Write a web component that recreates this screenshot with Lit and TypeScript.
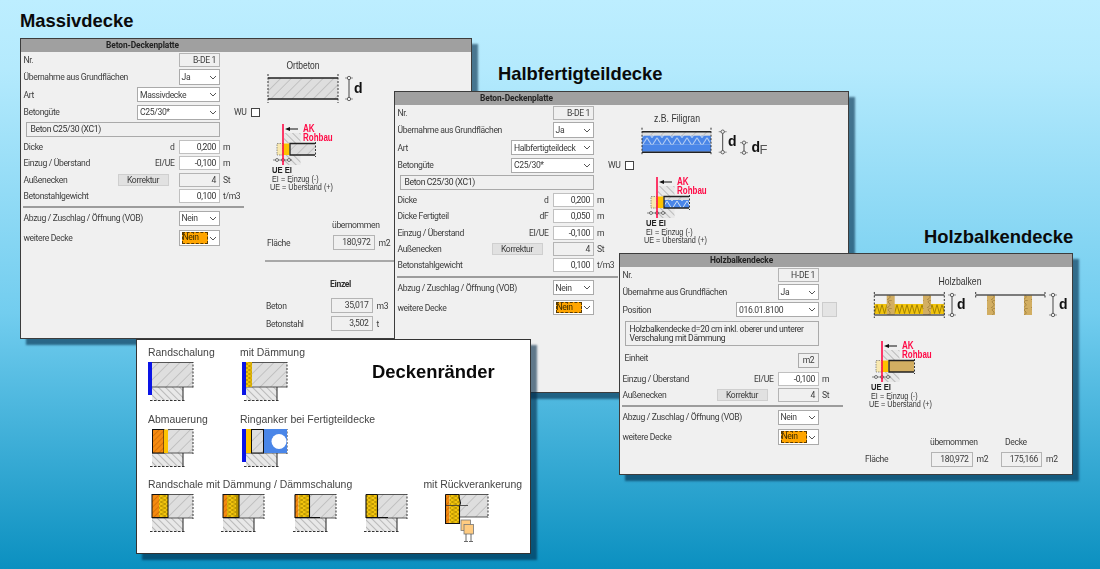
import { LitElement, html, svg, css, nothing } from 'lit';
import { customElement } from 'lit/decorators.js';
import { classMap } from 'lit/directives/class-map.js';

const chevron = html`<svg class="chev" width="8" height="5" viewBox="0 0 8 5"><path d="M1 1l3 3 3-3" fill="none" stroke="#555" stroke-width="1"/></svg>`;

const sel = (value: string, size = 'sm', orange = false) => html`
  <div class=${classMap({ sel: true, [size]: true })}>
    <span class=${orange ? 'focus' : ''}>${value}</span>${chevron}
  </div>`;

const box = (value: string, edit = false) =>
  html`<div class=${classMap({ box: true, edit })}>${value}</div>`;

const row = (label: string, ctl: unknown, sym = '', trail: unknown = '') => html`
  <div class="row">
    <span class="lab">${label}</span>
    ${sym ? html`<span class="sym">${sym}</span>` : nothing}
    ${ctl}
    <span class="trail">${trail}</span>
  </div>`;

// the captions in the drawings are squeezed sideways, so each gets its measured width
const label = (cls: string, x: number, y: number, width: number, text: string) =>
  svg`<text class=${cls} x=${x} y=${y} textLength=${width} lengthAdjust="spacingAndGlyphs">${text}</text>`;

const dim = (x: number, y1: number, y2: number) => svg`
  <line x1=${x} y1=${y1} x2=${x} y2=${y2} stroke="#444"/>
  <line x1=${x - 4} y1=${y1} x2=${x + 4} y2=${y1} stroke="#666" stroke-width=".7"/>
  <line x1=${x - 4} y1=${y2} x2=${x + 4} y2=${y2} stroke="#666" stroke-width=".7"/>
  <circle cx=${x} cy=${y1} r="1.7" fill="#f0f0f0" stroke="#444" stroke-width=".8"/>
  <circle cx=${x} cy=${y2} r="1.7" fill="#f0f0f0" stroke="#444" stroke-width=".8"/>`;

const edgeDash = (x: number, y1: number, y2: number) =>
  svg`<line x1=${x} y1=${y1} x2=${x} y2=${y2} stroke="#333" stroke-width="1" stroke-dasharray="2 1.5"/>`;

// eck detail with AK line, the slab part changes per window
const detail = (kind: string) => {
  const slab =
    kind === 'beton'
      ? svg`<rect x="27" y="19.5" width="25" height="11.5" fill="url(#hatch)"/>`
      : kind === 'fili'
        ? svg`<rect x="27" y="19.5" width="25" height="3.5" fill="url(#hatch)"/>
              <rect x="27" y="23" width="25" height="8" fill="url(#blue)"/>`
        : svg`<rect x="27" y="19.5" width="25" height="11.5" fill="#d2ae62"/>`;
  return html`<svg class="detail" width="130" height="70" viewBox="0 0 130 70">
    <rect x="21" y="9" width="16.5" height="10.5" fill="url(#wall)"/>
    <rect x="21" y="31" width="16.5" height="10" fill="url(#wall)"/>
    <rect x="14" y="19.5" width="6" height="11.5" fill="#f8e8b0" stroke="#555" stroke-width=".6" stroke-dasharray="1.5 1"/>
    <rect x="20" y="19.5" width="6.5" height="11.5" fill="#fcc200"/>
    ${slab}
    <path d="M52 19.5H27V31H52" fill="none" stroke="#222" stroke-width="1.3"/>
    ${edgeDash(52.5, 18, 33)}
    <line x1="10" y1="36" x2="29" y2="36" stroke="#555" stroke-width=".7"/>
    <circle cx="14" cy="36" r="1.5" fill="#f0f0f0" stroke="#444" stroke-width=".7"/>
    <circle cx="20" cy="36" r="1.5" fill="#f0f0f0" stroke="#444" stroke-width=".7"/>
    <circle cx="26" cy="36" r="1.5" fill="#f0f0f0" stroke="#444" stroke-width=".7"/>
    <line x1="20" y1="0" x2="20" y2="41" stroke="#ff0a46" stroke-width="1.6"/>
    <path d="M35 5H26" stroke="#111" fill="none"/><path d="M22 5l5-2v4z" fill="#111"/>
    ${label('ak', 40, 7.5, 11.7, 'AK')}
    ${label('ak', 40, 17, 29.7, 'Rohbau')}
    ${label('ue', 9, 48.5, 20, 'UE EI')}
    ${label('note', 9, 58, 46.7, 'EI = Einzug (-)')}
    ${label('note', 7, 66, 63, 'UE = Überstand (+)')}
  </svg>`;
};

const ortbeton = html`<svg class="fig" width="130" height="72" viewBox="0 -1 130 72">
  ${label('cap', 23.5, 15.5, 33, 'Ortbeton')}
  <rect x="5" y="25" width="70" height="21" fill="url(#hatch)"/>
  <path d="M5 25H75M5 46H75" stroke="#222" stroke-width="1.4"/>
  ${edgeDash(5, 21, 50)}${edgeDash(75, 21, 50)}
  ${dim(86, 25, 46)}
  <text class="d" x="91" y="40">d</text>
</svg>`;

const filigran = html`<svg class="fig" width="140" height="72" viewBox="0 -.7 140 72">
  ${label('cap', 17, 16, 46, 'z.B. Filigran')}
  <rect x="5" y="26" width="69" height="5" fill="url(#hatch)"/>
  <rect x="5" y="30" width="69" height="9" fill="url(#blue)"/>
  <rect x="5" y="39" width="69" height="7" fill="#4a86e8"/>
  <path d="M5 26H74M5 46.5H74" stroke="#222" stroke-width="1.4"/>
  ${edgeDash(5, 22, 50)}${edgeDash(74, 22, 50)}
  ${dim(85.7, 26, 46.5)}
  <text class="d" x="91" y="40">d</text>
  ${dim(107, 37, 47)}
  <text class="d" x="114.5" y="46">d</text>
  <text class="f" x="122.5" y="48">F</text>
</svg>`;

const beam = (x: number, h = 20) =>
  svg`<rect x=${x} y="27" width="8" height=${h} fill="url(#wood)"/>`;

const holz = html`<svg class="fig" width="210" height="73.7" viewBox="0 -1 210 73.7">
  ${label('cap', 76.5, 17.5, 43, 'Holzbalken')}
  <rect x="12.3" y="36" width="70" height="10" fill="url(#ins)"/>
  ${beam(24.7)}${beam(61)}
  <path d="M12.3 27H82.3M12.3 47H82.3" stroke="#555" stroke-width="1.6"/>
  ${edgeDash(12.3, 24, 50)}${edgeDash(82.3, 24, 50)}
  ${dim(90, 27, 47)}
  <text class="d" x="95" y="41">d</text>
  ${beam(125)}${beam(162)}
  <path d="M113.7 27H183" stroke="#555" stroke-width="1.6"/>
  ${edgeDash(113.7, 24, 30)}${edgeDash(183, 24, 30)}
  ${dim(191, 27, 47)}
  <text class="d" x="197" y="41">d</text>
</svg>`;

// one cut through a slab edge; front holds what sits before the slab
const edge = (slabX: number, front: unknown, h = 24, w = 45) => html`
  <svg class="edge" width="50" height=${h + 16} viewBox="0 0 50 ${h + 16}">
    <rect x=${slabX} y="0" width=${w - slabX} height=${h} fill="url(#hatch)"/>
    <rect x="4" y=${h} width="31" height="13.5" fill="url(#wall)"/>
    <path d="M${slabX} .5H${w}" stroke="#333" stroke-width=".8"/>
    <path d="M4 ${h}H${w}" stroke="#333" stroke-width=".8"/>
    <path d="M35 ${h}V${h + 13.5}" stroke="#222" stroke-width="1"/>
    ${edgeDash(w, -1, h + 1)}
    <line x1="2" y1=${h + 13.5} x2="38" y2=${h + 13.5} stroke="#333" stroke-dasharray="2.5 1.5"/>
    ${front}
  </svg>`;

const blueBar = svg`<rect x="0" y="0" width="4" height="33" fill="#0a14e6"/>`;

@customElement('app-root')
export class AppRoot extends LitElement {
  static styles = css`
    :host {
      display: block;
      position: relative;
      width: 1100px;
      height: 569px;
      overflow: hidden;
      font-family: 'Liberation Sans', Arial, sans-serif;
      background: linear-gradient(180deg, #bdeeff 0%, #b4eafd 12%, #72cdef 55%, #0b90c0 100%);
    }
    .defs { position: absolute; width: 0; height: 0; }
    h2 {
      position: absolute;
      margin: 0;
      font-size: 18.4px;
      line-height: 22px;
      font-weight: bold;
      color: #0a0a0a;
    }
    .h1 { left: 20px; top: 10px; }
    .h2 { left: 498px; top: 63px; }
    .h3 { left: 924px; top: 226px; }

    .win {
      position: absolute;
      box-sizing: border-box;
      background: #f0f0f0;
      border: 1px solid #3c3c3c;
      box-shadow: 6px 6px 2px rgba(0, 40, 70, 0.6);
      color: #3c3c3c;
      font-family: Roboto, 'Liberation Sans', sans-serif;
      font-size: 8.6px;
      letter-spacing: -0.35px;
      display: flex;
      flex-direction: column;
      filter: blur(0.25px);
    }
    .w1 { left: 20px; top: 38px; width: 452px; height: 301px; }
    .w2 { left: 394px; top: 91px; width: 455px; height: 302px; }
    .w3 { left: 619px; top: 253px; width: 454px; height: 222px; }
    .bar {
      height: 13px;
      line-height: 13px;
      background: #a0a0a0;
      flex: none;
    }
    .bar b {
      display: block;
      width: 243px;
      text-align: center;
      font-size: 8.4px;
      letter-spacing: -0.1px;
      color: #222;
    }
    .body { display: flex; flex: 1; }
    .form {
      width: 223px;
      flex: none;
      box-sizing: border-box;
      padding: 1px 0 0 2.5px;
      display: flex;
      flex-direction: column;
      gap: 2.4px;
    }
    .row { display: flex; align-items: center; min-height: 14px; white-space: nowrap; }
    .lab { flex: 1; }
    .sym { margin-right: 4px; }
    .trail { width: 24px; flex: none; padding-left: 3px; box-sizing: border-box; display: flex; align-items: center; gap: 4px; }
    .box {
      width: 41.5px;
      height: 14px;
      line-height: 13px;
      box-sizing: border-box;
      border: 1px solid #b4b4b4;
      text-align: right;
      padding-right: 3px;
      flex: none;
    }
    .box.edit { background: #fff; border-color: #c0c0c0; color: #333; }
    .sel {
      height: 15.3px;
      box-sizing: border-box;
      border: 1px solid #aaa;
      background: #fff;
      display: flex;
      align-items: center;
      justify-content: space-between;
      padding: 0 2.5px 0 2px;
      flex: none;
    }
    .sm { width: 41.5px; }
    .lg { width: 83px; }
    .focus {
      background: #ffa500;
      outline: 1px dashed #5a3a00;
      outline-offset: -1px;
      width: 26px;
      height: 11.5px;
      line-height: 11.5px;
      padding-left: 1px;
      box-sizing: border-box;
      color: #3a2a00;
    }
    .check { width: 9px; height: 9px; background: #fff; border: 1px solid #444; flex: none; box-sizing: border-box; }
    .wu { margin-left: 11px; }
    .btn {
      width: 51px;
      height: 12px;
      line-height: 11px;
      box-sizing: border-box;
      text-align: center;
      background: #e1e1e1;
      border: 1px solid #cfcfcf;
      margin-right: 10px;
      flex: none;
    }
    .txt {
      margin-left: 2px;
      width: 194px;
      box-sizing: border-box;
      border: 1px solid #aaa;
      padding: 0 4px;
      height: 15px;
      line-height: 13px;
      color: #333;
    }
    .txt.two { height: 25px; line-height: 9px; padding-top: 3px; margin-top: 1px; white-space: nowrap; }
    hr {
      margin: 1px 0 0 -0.5px;
      height: 2px;
      width: 221px;
      border: 0;
      background: #9c9c9c;
      flex: none;
    }
    .more { margin-top: 2px; }
    .unit-row { align-items: flex-start; height: 16px; margin-top: 5px; }
    .unit-row .lab { padding-left: 2px; }
    .unit-box { width: 21px; height: 15px; line-height: 13px; box-sizing: border-box; border: 1px solid #aaa; background: #f0f0f0; text-align: center; flex: none; }
    .gray-btn { width: 15px; height: 15px; background: #e4e4e4; border: 1px solid #ccc; box-sizing: border-box; }

    .side { flex: 1; display: flex; flex-direction: column; min-width: 0; padding-left: 19px; }
    svg { display: block; flex: none; }
    .cap { font-size: 10.5px; letter-spacing: 0; fill: #333; font-family: 'Liberation Sans', sans-serif; }
    .d { font-size: 14px; letter-spacing: 0; font-weight: bold; fill: #111; font-family: 'Liberation Sans', sans-serif; }
    .f { font-size: 13px; letter-spacing: 0; fill: #555; font-family: 'Liberation Sans', sans-serif; }
    .ak { font-size: 10px; letter-spacing: 0; font-weight: bold; fill: #ff0a46; font-family: 'Liberation Sans', sans-serif; }
    .ue { font-size: 9.5px; letter-spacing: 0; font-weight: bold; fill: #222; font-family: 'Liberation Sans', sans-serif; }
    .note { font-size: 8.4px; letter-spacing: 0; fill: #333; font-family: 'Liberation Sans', sans-serif; }
    .totals { display: flex; flex-direction: column; white-space: nowrap; }
    .t1 { margin-top: 25px; }
    .t3 { margin-top: 25px; }
    .t-head, .t-row { display: flex; align-items: center; }
    .t-head { height: 12px; padding-left: 69px; }
    .t3 .t-head { padding-left: 68px; margin-bottom: 4px; }
    .t3 .t-head span:first-child { width: 75px; }
    .t-row { height: 15px; margin-top: 4px; padding-left: 4px; }
    .t3 .t-row { padding-left: 3px; margin-top: 0; }
    .t-lab { width: 66px; flex: none; }
    .t-row .box { height: 15px; }
    .t-unit { margin-left: 4px; width: 24px; flex: none; }
    .t-div { height: 2px; width: 200px; margin: 10px 0 0 2px; background: #a8a8a8; }
    .t-sub { font-weight: bold; padding-left: 67px; margin-top: 16px; height: 12px; line-height: 12px; color: #333; }
    .t-row.tight { padding-left: 3px; margin-top: 3px; }
    .t-sub + .t-row.tight { margin-top: 8px; }
    .t-row.tight .t-lab { width: 65px; }

    .panel {
      position: absolute;
      left: 136px;
      top: 339px;
      width: 395px;
      height: 215px;
      box-sizing: border-box;
      background: #fff;
      border: 1px solid #333;
      box-shadow: 6px 6px 2px rgba(0, 40, 70, 0.6);
      padding: 6px 0 0 11px;
      color: #444;
      font-size: 10.45px;
      display: flex;
      flex-direction: column;
      filter: blur(0.25px);
    }
    .pr { display: flex; }
    .cell { display: flex; flex-direction: column; white-space: nowrap; line-height: 14px; }
    .cell svg { margin-top: 2px; }
    .c1 { width: 92px; }
    .c2 { width: 132px; }
    .c2 svg { margin-left: 2.3px; }
    .ring svg { margin-left: 2.3px; }
    .pr2 { margin-top: 10px; }
    .pr3 { margin-top: 9px; justify-content: space-between; padding-right: 8px; }
    .figs { display: flex; margin-top: 2px; }
    .figs .sp { width: 21.3px; }
    .anchor { margin-left: 33px; }
    .pt { font-size: 18.4px; font-weight: bold; color: #0a0a0a; line-height: 22px; margin-top: 15px; }
  `;

  renderDefs() {
    return html`<svg class="defs" aria-hidden="true"><defs>
      <pattern id="hatch" width="7.5" height="7.5" patternUnits="userSpaceOnUse" patternTransform="rotate(-45)">
        <rect width="7.5" height="7.5" fill="#dedede"/><line x1="0" y1="0" x2="7.5" y2="0" stroke="#a6a6a6" stroke-width="1"/>
      </pattern>
      <pattern id="wall" width="5" height="5" patternUnits="userSpaceOnUse" patternTransform="rotate(45)">
        <rect width="5" height="5" fill="#e8e8e8"/><line x1="0" y1="0" x2="5" y2="0" stroke="#8a8a8a" stroke-width="1"/>
      </pattern>
      <pattern id="blue" width="10" height="8" patternUnits="userSpaceOnUse">
        <rect width="10" height="8" fill="#4a86e8"/><path d="M0 0L5 8L10 0" stroke="#cfe0f5" fill="none" stroke-width="1"/>
      </pattern>
      <pattern id="ins" width="5" height="10" patternUnits="userSpaceOnUse" y="36">
        <rect width="5" height="10" fill="#f2c40c"/><path d="M0 .5L2.5 9.5L5 .5" stroke="#8a6d00" fill="none" stroke-width=".8"/>
      </pattern>
      <pattern id="ins2" width="6" height="4" patternUnits="userSpaceOnUse">
        <rect width="6" height="4" fill="#f2c40c"/><path d="M0 0L6 2L0 4" stroke="#a88500" fill="none" stroke-width=".7"/>
      </pattern>
      <pattern id="wood" width="8" height="8" patternUnits="userSpaceOnUse">
        <rect width="8" height="8" fill="#d2ae62"/><path d="M1 8Q6 5 3 3T6 0" stroke="#8a6a2a" fill="none" stroke-width=".6"/>
      </pattern>
      <pattern id="brick" width="4" height="4" patternUnits="userSpaceOnUse" patternTransform="rotate(-45)">
        <rect width="4" height="4" fill="#f58a10"/><line x1="0" y1="0" x2="4" y2="0" stroke="#b85c00" stroke-width="1"/>
      </pattern>
    </defs></svg>`;
  }

  formTail() {
    return html`
      <hr />
      ${row('Abzug / Zuschlag / Öffnung (VOB)', sel('Nein'))}
      <div class="more">${row('weitere Decke', sel('Nein', 'sm', true))}</div>`;
  }

  massiv() {
    return html`<div class="win w1">
      <div class="bar"><b>Beton-Deckenplatte</b></div>
      <div class="body">
        <div class="form">
          ${row('Nr.', box('B-DE 1'))}
          ${row('Übernahme aus Grundflächen', sel('Ja'))}
          ${row('Art', sel('Massivdecke', 'lg'))}
          ${row('Betongüte', sel('C25/30*', 'lg'), '', html`<span class="wu">WU</span><span class="check"></span>`)}
          <div class="txt">Beton C25/30 (XC1)</div>
          ${row('Dicke', box('0,200', true), 'd', 'm')}
          ${row('Einzug / Überstand', box('-0,100', true), 'EI/UE', 'm')}
          ${row('Außenecken', html`<div class="btn">Korrektur</div>${box('4')}`, '', 'St')}
          ${row('Betonstahlgewicht', box('0,100', true), '', 't/m3')}
          ${this.formTail()}
        </div>
        <div class="side">
          ${ortbeton}
          ${detail('beton')}
          <div class="totals t1">
            <div class="t-head"><span>übernommen</span></div>
            <div class="t-row"><span class="t-lab">Fläche</span>${box('180,972')}<span class="t-unit">m2</span></div>
            <div class="t-div"></div>
            <div class="t-sub">Einzel</div>
            <div class="t-row tight"><span class="t-lab">Beton</span>${box('35,017')}<span class="t-unit">m3</span></div>
            <div class="t-row tight"><span class="t-lab">Betonstahl</span>${box('3,502')}<span class="t-unit">t</span></div>
          </div>
        </div>
      </div>
    </div>`;
  }

  halb() {
    return html`<div class="win w2">
      <div class="bar"><b>Beton-Deckenplatte</b></div>
      <div class="body">
        <div class="form">
          ${row('Nr.', box('B-DE 1'))}
          ${row('Übernahme aus Grundflächen', sel('Ja'))}
          ${row('Art', sel('Halbfertigteildeck', 'lg'))}
          ${row('Betongüte', sel('C25/30*', 'lg'), '', html`<span class="wu">WU</span><span class="check"></span>`)}
          <div class="txt">Beton C25/30 (XC1)</div>
          ${row('Dicke', box('0,200', true), 'd', 'm')}
          ${row('Dicke Fertigteil', box('0,050', true), 'dF', 'm')}
          ${row('Einzug / Überstand', box('-0,100', true), 'EI/UE', 'm')}
          ${row('Außenecken', html`<div class="btn">Korrektur</div>${box('4')}`, '', 'St')}
          ${row('Betonstahlgewicht', box('0,100', true), '', 't/m3')}
          ${this.formTail()}
        </div>
        <div class="side">${filigran}${detail('fili')}</div>
      </div>
    </div>`;
  }

  holzbalken() {
    return html`<div class="win w3">
      <div class="bar"><b>Holzbalkendecke</b></div>
      <div class="body">
        <div class="form">
          ${row('Nr.', box('H-DE 1'))}
          ${row('Übernahme aus Grundflächen', sel('Ja'))}
          ${row('Position', sel('016.01.8100', 'lg'), '', html`<span class="gray-btn"></span>`)}
          <div class="txt two">Holzbalkendecke d=20 cm inkl. oberer und unterer<br />Verschalung mit Dämmung</div>
          <div class="row unit-row"><span class="lab">Einheit</span><span class="unit-box">m2</span><span class="trail"></span></div>
          ${row('Einzug / Überstand', box('-0,100', true), 'EI/UE', 'm')}
          ${row('Außenecken', html`<div class="btn">Korrektur</div>${box('4')}`, '', 'St')}
          ${this.formTail()}
        </div>
        <div class="side">
          ${holz}
          ${detail('holz')}
          <div class="totals t3">
            <div class="t-head"><span>übernommen</span><span>Decke</span></div>
            <div class="t-row">
              <span class="t-lab">Fläche</span>${box('180,972')}<span class="t-unit">m2</span>${box('175,166')}<span class="t-unit">m2</span>
            </div>
          </div>
        </div>
      </div>
    </div>`;
  }

  panel() {
    return html`<div class="panel">
      <div class="pr">
        <div class="cell c1">Randschalung${edge(4, blueBar, 25)}</div>
        <div class="cell c2">mit Dämmung${edge(10, svg`${blueBar}<rect x="4" y="0" width="6" height="25" fill="url(#ins2)"/>`, 25)}</div>
        <div class="pt">Deckenränder</div>
      </div>
      <div class="pr pr2">
        <div class="cell c1">Abmauerung${edge(20, svg`
          <rect x="4.5" y=".5" width="11.5" height="23.5" fill="url(#brick)" stroke="#111" stroke-width="1"/>
          <rect x="16" y=".5" width="4" height="23.5" fill="#fcc200"/>`)}</div>
        <div class="cell ring">Ringanker bei Fertigteildecke${edge(21, svg`
          <rect x="21" y="0" width="24" height="24" fill="#4a86e8"/>
          <circle cx="37" cy="12.5" r="7.5" fill="#fff"/>
          ${blueBar}
          <rect x="4" y="0" width="5" height="24" fill="#fcc200"/>
          <rect x="9.5" y=".5" width="12" height="23.5" fill="url(#hatch)" stroke="#111" stroke-width="1"/>`)}</div>
      </div>
      <div class="pr pr3">
        <span class="cell">Randschale mit Dämmung / Dämmschalung</span>
        <span class="cell">mit Rückverankerung</span>
      </div>
      <div class="figs">
        ${edge(20, svg`
          <rect x="4" y=".5" width="7" height="23" fill="url(#brick)"/>
          <rect x="11" y=".5" width="9" height="23" fill="url(#ins2)"/>
          <rect x="4" y=".5" width="16" height="23" fill="none" stroke="#111" stroke-width="1"/>`)}
        <span class="sp"></span>
        ${edge(20, svg`
          <rect x="4" y=".5" width="4" height="23" fill="url(#brick)"/>
          <rect x="8" y=".5" width="9" height="23" fill="url(#ins2)"/>
          <rect x="17" y=".5" width="3" height="23" fill="#b49000"/>
          <rect x="4" y=".5" width="16" height="23" fill="none" stroke="#111" stroke-width="1"/>`)}
        <span class="sp"></span>
        ${edge(18.5, svg`
          <rect x="4" y=".5" width="3.5" height="23" fill="url(#brick)"/>
          <rect x="7.5" y=".5" width="11" height="23" fill="url(#ins2)"/>
          <path d="M4 .5V23.5H29M18.5 .5V23.5M4 .5H18.5" fill="none" stroke="#111" stroke-width="1.1"/>`)}
        <span class="sp"></span>
        ${edge(15.5, svg`
          <rect x="4" y=".5" width="11.5" height="23" fill="url(#ins2)"/>
          <path d="M4 .5V23.5H26M15.5 .5V23.5M4 .5H15.5" fill="none" stroke="#111" stroke-width="1.1"/>`)}
        <svg class="anchor" width="50" height="50" viewBox="0 0 50 50">
          <rect x="15" y="0" width="28" height="23" fill="url(#hatch)"/>
          <path d="M15 .5H43M15 23H43" stroke="#333" stroke-width=".8"/>
          ${edgeDash(43, -1, 24)}
          <rect x=".5" y=".5" width="4" height="29" fill="url(#brick)"/>
          <rect x="4.5" y=".5" width="10.5" height="29" fill="url(#ins2)"/>
          <path d="M.5 .5V29.5H14.5V12L15.5 9L14 3V.5H.5" fill="none" stroke="#111" stroke-width="1.1"/>
          <path d="M1 11.5H23" stroke="#333" stroke-width=".8"/>
          <rect x="16" y="26" width="9.5" height="10.5" fill="#ffcb80" stroke="#777" stroke-width=".8"/>
          <rect x="19" y="30.5" width="9.5" height="9.5" fill="#ffcb80" stroke="#777" stroke-width=".8"/>
          <path d="M21 40V47M26 40V47M19 47.5H23M24 47.5H28" stroke="#444" stroke-width=".8" fill="none"/>
        </svg>
      </div>
    </div>`;
  }

  render() {
    return html`
      ${this.renderDefs()}
      <h2 class="h1">Massivdecke</h2>
      <h2 class="h2">Halbfertigteildecke</h2>
      ${this.massiv()}
      ${this.halb()}
      ${this.panel()}
      <h2 class="h3">Holzbalkendecke</h2>
      ${this.holzbalken()}
    `;
  }
}
